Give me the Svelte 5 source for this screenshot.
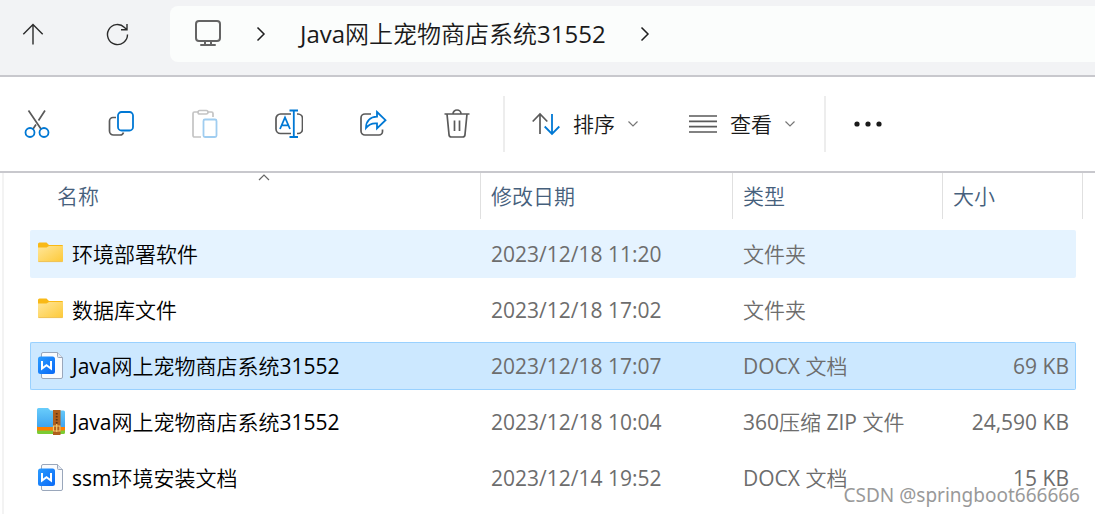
<script lang="ts">
  type FileKind = 'folder' | 'doc' | 'zip';

  interface FileEntry {
    name: string;
    kind: FileKind;
    modified: string;
    type: string;
    size: string;
  }

  const files: FileEntry[] = [
    { name: '环境部署软件', kind: 'folder', modified: '2023/12/18 11:20', type: '文件夹', size: '' },
    { name: '数据库文件', kind: 'folder', modified: '2023/12/18 17:02', type: '文件夹', size: '' },
    { name: 'Java网上宠物商店系统31552', kind: 'doc', modified: '2023/12/18 17:07', type: 'DOCX 文档', size: '69 KB' },
    { name: 'Java网上宠物商店系统31552', kind: 'zip', modified: '2023/12/18 10:04', type: '360压缩 ZIP 文件', size: '24,590 KB' },
    { name: 'ssm环境安装文档', kind: 'doc', modified: '2023/12/14 19:52', type: 'DOCX 文档', size: '15 KB' }
  ];

  let selected = 2;
  let hovered = 0;
</script>

<div class="explorer">
  <nav class="topbar">
    <button class="icon-btn" aria-label="向上">
      <svg width="28" height="28" viewBox="0 0 28 28" class="thin">
        <path d="M14 24.5V4.5M4.3 14.2L14 4.5l9.7 9.7" />
      </svg>
    </button>
    <button class="icon-btn" aria-label="刷新">
      <svg width="28" height="28" viewBox="0 0 28 28" class="thin">
        <path d="M24.5 14.5a10 10 0 1 1-3-7.1l2.3 2.3M24 4v5.7h-6" />
      </svg>
    </button>
    <div class="address">
      <button class="crumb" aria-label="此电脑">
        <svg width="28" height="28" viewBox="0 0 28 28" class="monitor">
          <rect x="2" y="1" width="24" height="20" rx="3" />
          <path d="M11 21v4M17 21v4M7 25h14" />
        </svg>
      </button>
      <svg class="chevron first" width="10" height="16" viewBox="0 0 10 16"><path d="M1.5 1.5L8 8l-6.5 6.5" /></svg>
      <button class="crumb">Java网上宠物商店系统31552</button>
      <svg class="chevron" width="10" height="16" viewBox="0 0 10 16"><path d="M1.5 1.5L8 8l-6.5 6.5" /></svg>
    </div>
  </nav>

  <div class="toolbar" role="toolbar">
    <div class="actions">
      <button class="icon-btn" aria-label="剪切">
        <svg width="28" height="30" viewBox="0 0 28 30">
          <path class="gray" d="M5.5 1.5L18 20M22 1.5l-6.5 10M13 15.5L10 20" />
          <circle class="blue" cx="7" cy="23.5" r="4.5" />
          <circle class="blue" cx="21" cy="23.5" r="4.5" />
        </svg>
      </button>
      <button class="icon-btn" aria-label="复制">
        <svg width="28" height="30" viewBox="0 0 28 30">
          <path class="gray" d="M9 8.5H6A3.5 3.5 0 0 0 2.5 12v10A4 4 0 0 0 6.5 26H13a3.5 3.5 0 0 0 3.5-2.5" />
          <rect class="blue" x="11" y="3" width="15" height="18.5" rx="3.5" />
        </svg>
      </button>
      <button class="icon-btn disabled" aria-label="粘贴" disabled>
        <svg width="28" height="30" viewBox="0 0 28 30">
          <path class="gray" d="M10 28H3.5A1.5 1.5 0 0 1 2 26.5v-22A1.5 1.5 0 0 1 3.5 3H7M17 3h3.5A1.5 1.5 0 0 1 22 4.5V8" />
          <rect class="gray" x="7" y="1.5" width="10" height="3.5" rx="1.7" />
          <rect class="blue" x="12.5" y="10.5" width="13" height="17.5" rx="1.5" />
        </svg>
      </button>
      <button class="icon-btn" aria-label="重命名">
        <svg width="28" height="30" viewBox="0 0 28 30">
          <path class="gray" d="M16 5H5.5A4.5 4.5 0 0 0 1 9.5V20a4.5 4.5 0 0 0 4.5 4.5H16M22 5h1a4.5 4.5 0 0 1 4.5 4.5V20a4.5 4.5 0 0 1-4.5 4.5h-1" />
          <path class="blue" d="M5 20L10 8.5 15 20M7 16.3h6.2M14.5 1.5H23M14.5 28H23M18.8 2v26" />
        </svg>
      </button>
      <button class="icon-btn" aria-label="共享">
        <svg width="28" height="30" viewBox="0 0 28 30">
          <path class="gray" d="M12 5H6A4 4 0 0 0 2 9v13a4 4 0 0 0 4 4h14a3.5 3.5 0 0 0 3.5-3.5v-2" />
          <path class="blue" d="M18 3l8.5 8.2-8.5 8.2v-5c-4.500-.5-8 .8-11 4.500 0-6.500 4-11 11-11.300z" />
        </svg>
      </button>
      <button class="icon-btn" aria-label="删除">
        <svg width="28" height="30" viewBox="0 0 28 30">
          <path class="gray" d="M1.5 5h25M10 4.800a4 3.800 0 0 1 8 0M4 5l2 20.500A2.500 2.500 0 0 0 8.500 28h11a2.500 2.500 0 0 0 2.500-2.500L24 5M11.500 11.500V22M16.500 11.500V22" />
        </svg>
      </button>
    </div>

    <div class="divider"></div>

    <button class="menu-btn">
      <svg width="28" height="26" viewBox="0 0 28 26">
        <path class="gray" d="M8 23V3M.7 10.500L8 3l7.300 7.500" />
        <path class="blue" d="M20 3v20M12.700 15.500L20 23l7.300-7.500" />
      </svg>
      <span>排序</span>
      <svg class="down" width="10" height="6" viewBox="0 0 10 6"><path d="M.5.5L5 5 9.500.5" /></svg>
    </button>
    <button class="menu-btn view">
      <svg width="28" height="26" viewBox="0 0 28 26">
        <path class="gray" d="M0 5h28M0 10.300h28M0 15.600h28M0 21h28" />
      </svg>
      <span>查看</span>
      <svg class="down" width="10" height="6" viewBox="0 0 10 6"><path d="M.5.5L5 5 9.500.5" /></svg>
    </button>

    <div class="divider"></div>

    <button class="more" aria-label="更多">
      <svg width="28" height="6" viewBox="0 0 28 6">
        <circle cx="3" cy="3" r="2.6" />
        <circle cx="14" cy="3" r="2.6" />
        <circle cx="25" cy="3" r="2.6" />
      </svg>
    </button>
  </div>

  <main class="list">
    <table>
      <thead>
        <tr>
          <th class="name">
            <svg class="sort-mark" width="12" height="7" viewBox="0 0 12 7"><path d="M1 6l5-5 5 5" /></svg>
            <button>名称</button>
          </th>
          <th class="date"><button>修改日期</button></th>
          <th class="type"><button>类型</button></th>
          <th class="size"><button>大小</button></th>
        </tr>
      </thead>
      <tbody>
        {#each files as file, i}
          <tr
            class:selected={selected === i}
            class:hovered={hovered === i}
            on:mouseenter={() => (hovered = i)}
          >
            <td>
              <button class="file" on:click={() => (selected = i)}>
                {#if file.kind === 'folder'}
                  <svg width="28" height="28" viewBox="0 0 28 28">
                    <defs>
                      <linearGradient id="folder{i}" x1="0" y1="0" x2="1" y2="1">
                        <stop offset="0" stop-color="#ffe69a" />
                        <stop offset="1" stop-color="#fdc937" />
                      </linearGradient>
                    </defs>
                    <path d="M1 4a1.500 1.500 0 0 1 1.500-1.500h7L12 5h13a1 1 0 0 1 1 1v5H1z" fill="#f9b916" />
                    <path d="M1 7.500h8.500L12 6h14v15a1 1 0 0 1-1 1H2a1 1 0 0 1-1-1z" fill="url(#folder{i})" />
                    <path d="M1.500 21.600h24" stroke="#efc35a" stroke-width="1" />
                  </svg>
                {:else if file.kind === 'doc'}
                  <svg width="28" height="28" viewBox="0 0 28 28">
                    <defs>
                      <linearGradient id="doc{i}" x1="0" y1="0" x2="1" y2="1">
                        <stop offset="0" stop-color="#2b9cff" />
                        <stop offset="1" stop-color="#0968f6" />
                      </linearGradient>
                    </defs>
                    <path d="M6 .5h14.500l5 5V25a1.500 1.500 0 0 1-1.500 1.500H6A1.500 1.500 0 0 1 4.500 25V2A1.500 1.500 0 0 1 6 .5z" fill="#fafbfd" stroke="#9aa7bb" />
                    <path d="M20.500.5v4a1 1 0 0 0 1 1h4" fill="#e5eaf2" stroke="#9aa7bb" />
                    <rect x="1" y="4.5" width="17" height="17.5" rx="2.5" fill="url(#doc{i})" />
                    <path d="M5 9v7.500l4.500-3.200 4.500 3.200V9" fill="none" stroke="#fff" stroke-width="2" />
                  </svg>
                {:else}
                  <svg width="28" height="28" viewBox="0 0 28 28">
                    <defs>
                      <linearGradient id="zip{i}" x1="0" y1="0" x2="0" y2="1">
                        <stop offset="0" stop-color="#69cdfb" />
                        <stop offset="1" stop-color="#3fa4ef" />
                      </linearGradient>
                    </defs>
                    <path d="M0 18h28v6.500a1.500 1.500 0 0 1-1.500 1.500h-25A1.500 1.500 0 0 1 0 24.500z" fill="#7bcb33" />
                    <path d="M0 17h28v4.500a1 1 0 0 1-1 1H1a1 1 0 0 1-1-1z" fill="#ff7f00" />
                    <path d="M0 1.500A1.500 1.500 0 0 1 1.500 0H11l2.500 2.500h13A1.500 1.500 0 0 1 28 4v15H1a1 1 0 0 1-1-1z" fill="url(#zip{i})" />
                    <rect x="16" y="2" width="7.5" height="25" fill="#b05f1c" />
                    <path d="M19.700 5v11" stroke="#5c3414" stroke-width="1.8" stroke-dasharray="1.5 1.5" />
                    <path d="M16.500 18h6.500v5h-6.500zM19.700 16v8" fill="none" stroke="#f3c66b" stroke-width="1.2" />
                  </svg>
                {/if}
                <span>{file.name}</span>
              </button>
            </td>
            <td>{file.modified}</td>
            <td>{file.type}</td>
            <td class="num">{file.size}</td>
          </tr>
        {/each}
      </tbody>
    </table>
  </main>

  <div class="watermark">CSDN @springboot666666</div>
</div>

<style>
  :global(body) {
    background: #fff;
  }

  .explorer {
    position: relative;
    min-height: 100vh;
    display: flex;
    flex-direction: column;
    font-family: 'Open Sans', 'Noto Sans CJK SC DemiLight', 'Noto Sans CJK SC', sans-serif;
    font-size: 21px;
    line-height: 28px;
    color: #1a1a1a;
  }

  button {
    margin: 0;
    padding: 0;
    border: none;
    background: transparent;
    font: inherit;
    color: inherit;
    cursor: pointer;
  }

  svg {
    display: block;
    flex-shrink: 0;
    fill: none;
  }

  .icon-btn {
    width: 48px;
    height: 48px;
    display: flex;
    align-items: center;
    justify-content: center;
  }

  .topbar {
    display: flex;
    align-items: center;
    gap: 36px;
    padding: 6px 0 13px 9px;
    background: #f2f3f5;
    border-bottom: 2px solid #c8c8cd;
  }

  .thin {
    stroke: #2b2b2b;
    stroke-width: 1.4;
  }

  .address {
    flex: 1;
    display: flex;
    align-items: center;
    height: 56px;
    margin-left: -7px;
    padding-left: 24px;
    border-radius: 8px 0 0 8px;
    background: #fbfdfc;
    font-size: 24px;
    line-height: 32px;
    white-space: nowrap;
  }

  .monitor {
    stroke: #646464;
    stroke-width: 2;
    stroke-linecap: round;
  }

  .chevron {
    margin-left: 34px;
    stroke: #1f1f1f;
    stroke-width: 1.5;
  }

  .chevron.first {
    margin-right: 34px;
  }

  .toolbar {
    display: flex;
    align-items: center;
    height: 94px;
    padding-left: 13px;
    border-bottom: 2px solid #c8c8cd;
    background: #fff;
  }

  .actions {
    display: flex;
    gap: 36px;
  }

  .gray {
    stroke: #5a5a5a;
    stroke-width: 1.7;
  }

  .blue {
    stroke: #0078d4;
    stroke-width: 1.8;
  }

  .disabled .gray {
    stroke: #c4c4c4;
  }

  .disabled .blue {
    stroke: #a0cdf0;
  }

  .divider {
    width: 2px;
    height: 56px;
    margin-left: 22px;
    background: #ededed;
  }

  .menu-btn {
    display: flex;
    align-items: center;
    gap: 13px;
    height: 48px;
    margin-left: 27px;
    white-space: nowrap;
  }

  .menu-btn.view {
    margin-left: 51px;
  }

  .divider + .more {
    margin-left: 28px;
  }

  .menu-btn + .divider {
    margin-left: 29px;
  }

  .down {
    stroke: #777;
    stroke-width: 1.2;
  }

  .more {
    height: 48px;
  }

  .more svg {
    fill: #1a1a1a;
  }

  .list {
    flex: 1;
    margin-left: 2px;
    padding: 0 19px 0 26px;
    border-left: 2px solid #f3f3f3;
  }

  table {
    width: 100%;
    margin-top: -8px;
    table-layout: fixed;
    border-collapse: separate;
    border-spacing: 0 8px;
  }

  th {
    position: relative;
    height: 45px;
    padding: 0 0 4px 11px;
    font-weight: 400;
    text-align: left;
    color: #46607c;
  }

  th::after {
    content: '';
    position: absolute;
    top: 0;
    right: -1px;
    width: 1px;
    height: 46px;
    background: #e0e0e0;
  }

  th.name {
    padding-left: 27px;
  }

  th.date {
    width: 241px;
  }

  th.type {
    width: 199px;
  }

  th.size {
    width: 123px;
  }

  th.size::after {
    right: -7px;
  }

  .sort-mark {
    position: absolute;
    top: 1px;
    left: calc(50% + 3px);
    stroke: #666;
    stroke-width: 1.2;
  }

  td {
    height: 46px;
    padding: 0 0 0 11px;
    border: 0 solid transparent;
    border-width: 1px 0;
    color: #6d6d6d;
    white-space: nowrap;
  }

  td:first-child {
    padding-left: 6px;
    border-left-width: 1px;
    border-radius: 2px 0 0 2px;
  }

  td:last-child {
    border-right-width: 1px;
    border-radius: 0 2px 2px 0;
  }

  td.num {
    padding: 0 6px 0 0;
    text-align: right;
  }

  .hovered td {
    background: #e5f3ff;
  }

  .selected td {
    background: #cce8ff;
    border-color: #99d1ff;
  }

  .file {
    display: flex;
    align-items: center;
    gap: 7px;
    color: #000;
  }

  .watermark {
    position: absolute;
    right: 15px;
    bottom: 6px;
    font-family: 'Noto Sans', sans-serif;
    font-size: 19px;
    line-height: 26px;
    color: #999;
    text-shadow: -1px -1px 1px #fff;
    pointer-events: none;
  }
</style>
